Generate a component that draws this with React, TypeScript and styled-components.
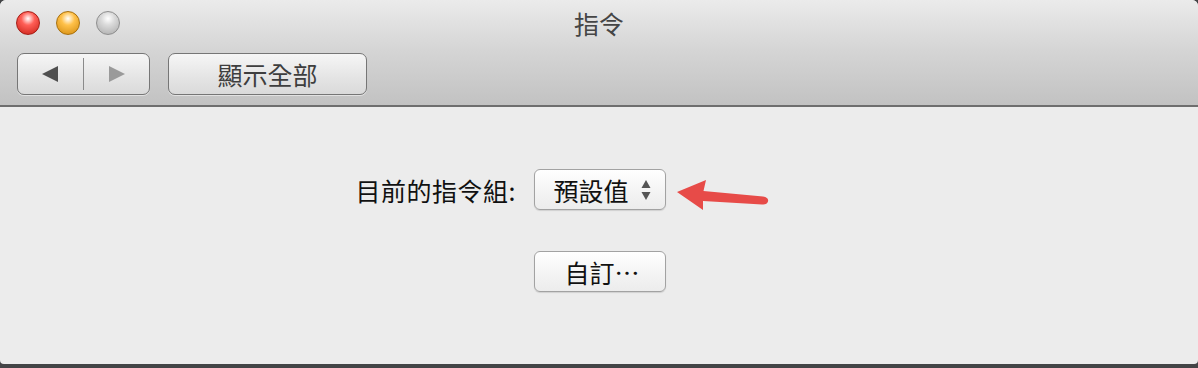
import React from "react";
import styled, { createGlobalStyle } from "styled-components";

const GlobalStyle = createGlobalStyle`
  html, body {
    margin: 0;
    padding: 0;
    background: #434446;
  }

  body {
    font-family: "Liberation Sans", "Noto Sans CJK TC", sans-serif;
  }
`;

const Window = styled.div`
  width: 1198px;
  height: 364px;
  display: flex;
  flex-direction: column;
  border-radius: 6px 6px 4px 4px;
  overflow: hidden;
  background: #ececec;
`;

const Toolbar = styled.header`
  height: 107px;
  box-sizing: border-box;
  padding: 9px 16px 0;
  display: flex;
  flex-direction: column;
  background: linear-gradient(#ebebeb, #d6d6d6 45%, #c2c2c2);
  border-bottom: 2px solid #6e6e6e;
`;

const TitleRow = styled.div`
  position: relative;
  height: 28px;
  display: flex;
  align-items: center;
  gap: 16px;
`;

const Light = styled.span<{ $c1: string; $c2: string; $edge: string }>`
  width: 24px;
  height: 24px;
  border-radius: 50%;
  box-sizing: border-box;
  border: 1px solid ${({ $edge }) => $edge};
  background: radial-gradient(circle at 50% 30%, #fff 0, ${({ $c1 }) => $c1} 35%, ${({ $c2 }) => $c2} 100%);
`;

const Title = styled.div`
  position: absolute;
  left: 0;
  right: 0;
  top: 0;
  text-align: center;
  font-family: "Noto Sans CJK TC", sans-serif;
  font-size: 25px;
  line-height: 28px;
  color: #454545;
  pointer-events: none;
`;

const ButtonRow = styled.div`
  display: flex;
  gap: 18px;
  margin-top: 16px;
  padding-left: 1px;
`;

const ToolButton = styled.button<{ $w: number }>`
  width: ${({ $w }) => $w}px;
  height: 42px;
  box-sizing: border-box;
  border: 1.5px solid #767676;
  border-radius: 7px;
  background: linear-gradient(#f6f6f6, #e4e4e4 60%, #dadada);
  box-shadow: 0 1px 0 rgba(255, 255, 255, 0.5);
  padding: 0;
  display: flex;
  align-items: center;
  justify-content: center;
  font-family: "Noto Sans CJK TC", sans-serif;
  font-size: 25px;
  color: #3e3e3e;
`;

const NavHalf = styled.span`
  flex: 1;
  height: 100%;
  display: flex;
  align-items: center;
  justify-content: center;
`;

const Divider = styled.span`
  width: 1.5px;
  height: 32px;
  background: #8a8a8a;
`;

const Content = styled.main`
  flex: 1;
  display: grid;
  grid-template-columns: 1fr 132px 1fr;
  grid-auto-rows: 41px;
  align-content: start;
  align-items: center;
  column-gap: 18px;
  row-gap: 41px;
  padding-top: 62px;
  padding-left: 2px;
`;

const Label = styled.span`
  justify-self: end;
  font-family: "Noto Sans CJK TC", sans-serif;
  font-size: 25px;
  letter-spacing: 0.5px;
  color: #111;
`;

const PopupButton = styled.button`
  grid-column: 2;
  width: 132px;
  height: 41px;
  box-sizing: border-box;
  border: 1px solid #a2a2a2;
  border-radius: 6px;
  background: linear-gradient(#ffffff, #f5f5f5 50%, #ececec);
  box-shadow: 0 1px 1px rgba(0, 0, 0, 0.12);
  display: flex;
  align-items: center;
  justify-content: center;
  gap: 12px;
  padding: 0 0 0 4px;
  font-family: "Noto Sans CJK TC", sans-serif;
  font-size: 25px;
  color: #111;
`;

const ArrowCell = styled.div`
  justify-self: start;
  margin-left: -11px;
  margin-top: 14px;
`;

function Arrow() {
  return (
    <svg width="100" height="40" viewBox="0 0 100 40" style={{ display: "block" }}>
      <path d="M4 15 L33 3 L30.5 14 L90 19.5 Q96 20.5 95 24.5 Q94 28 89 27.5 L30 24 L30 33 Z" fill="#e74b48" />
    </svg>
  );
}

export default function App() {
  return (
    <>
      <GlobalStyle />
      <Window>
        <Toolbar>
          <TitleRow>
            <Light $c1="#ff5f57" $c2="#c81f14" $edge="#a51d16" />
            <Light $c1="#ffc14a" $c2="#d28a0c" $edge="#a8700d" />
            <Light $c1="#dadada" $c2="#a9a9a9" $edge="#8e8e8e" />
            <Title>指令</Title>
          </TitleRow>
          <ButtonRow>
            <ToolButton $w={133}>
              <NavHalf>
                <svg width="18" height="16" viewBox="0 0 18 16">
                  <path d="M1 8 L17 0 L17 16 Z" fill="#4f4f4f" />
                </svg>
              </NavHalf>
              <Divider />
              <NavHalf>
                <svg width="18" height="16" viewBox="0 0 18 16">
                  <path d="M17 8 L1 0 L1 16 Z" fill="#9a9a9a" />
                </svg>
              </NavHalf>
            </ToolButton>
            <ToolButton $w={199}>顯示全部</ToolButton>
          </ButtonRow>
        </Toolbar>
        <Content>
          <Label>目前的指令組:</Label>
          <PopupButton>
            預設值
            <svg width="10" height="22" viewBox="0 0 10 22">
              <path d="M5 1 L9.5 9 L0.5 9 Z" fill="#555" />
              <path d="M5 21 L9.5 13 L0.5 13 Z" fill="#555" />
            </svg>
          </PopupButton>
          <ArrowCell>
            <Arrow />
          </ArrowCell>
          <PopupButton>自訂…</PopupButton>
        </Content>
      </Window>
    </>
  );
}
